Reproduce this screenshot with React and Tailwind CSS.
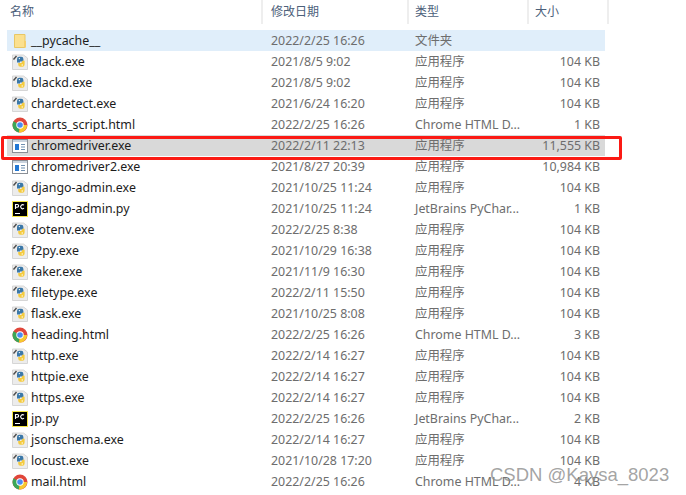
const PY = "py", CH = "ch", PC = "pc", EX = "ex", FO = "fo";
const APP = "应用程序";

const files = [
  [FO, "__pycache__", "2022/2/25 16:26", "文件夹", ""],
  [PY, "black.exe", "2021/8/5 9:02", APP, "104 KB"],
  [PY, "blackd.exe", "2021/8/5 9:02", APP, "104 KB"],
  [PY, "chardetect.exe", "2021/6/24 16:20", APP, "104 KB"],
  [CH, "charts_script.html", "2022/2/25 16:26", "Chrome HTML D...", "1 KB"],
  [EX, "chromedriver.exe", "2022/2/11 22:13", APP, "11,555 KB"],
  [EX, "chromedriver2.exe", "2021/8/27 20:39", APP, "10,984 KB"],
  [PY, "django-admin.exe", "2021/10/25 11:24", APP, "104 KB"],
  [PC, "django-admin.py", "2021/10/25 11:24", "JetBrains PyChar...", "1 KB"],
  [PY, "dotenv.exe", "2022/2/25 8:38", APP, "104 KB"],
  [PY, "f2py.exe", "2021/10/29 16:38", APP, "104 KB"],
  [PY, "faker.exe", "2021/11/9 16:30", APP, "104 KB"],
  [PY, "filetype.exe", "2022/2/11 15:50", APP, "104 KB"],
  [PY, "flask.exe", "2021/10/25 8:08", APP, "104 KB"],
  [CH, "heading.html", "2022/2/25 16:26", "Chrome HTML D...", "3 KB"],
  [PY, "http.exe", "2022/2/14 16:27", APP, "104 KB"],
  [PY, "httpie.exe", "2022/2/14 16:27", APP, "104 KB"],
  [PY, "https.exe", "2022/2/14 16:27", APP, "104 KB"],
  [PC, "jp.py", "2022/2/25 16:26", "JetBrains PyChar...", "2 KB"],
  [PY, "jsonschema.exe", "2022/2/14 16:27", APP, "104 KB"],
  [PY, "locust.exe", "2021/10/28 17:20", APP, "104 KB"],
  [CH, "mail.html", "2022/2/25 16:26", "Chrome HTML D...", "4 KB"],
];

const FileIcon = ({ type }) => {
  if (type === FO) {
    return (
      <svg width="16" height="16" viewBox="0 0 16 16">
        <path d="M2.500 1.500h10.500v13H2.500z" fill="#fbe08f" stroke="#e8c765" strokeWidth="1" />
        <path d="M12 8h2v6.500h-2z" fill="#f4cf6e" />
      </svg>
    );
  }
  if (type === CH) {
    return (
      <svg width="16" height="16" viewBox="0 0 16 16">
        <circle cx="8" cy="8" r="7.500" fill="#e0463a" />
        <path d="M8 8 1.500 4.300A7.500 7.500 0 0 0 7 15.400z" fill="#3ba657" />
        <path d="M8 8h7.200A7.500 7.500 0 0 1 7 15.400z" fill="#f7c92f" />
        <circle cx="8" cy="8" r="3.700" fill="#fff" />
        <circle cx="8" cy="8" r="2.800" fill="#4a8cf0" />
      </svg>
    );
  }
  if (type === PC) {
    return (
      <svg width="16" height="16" viewBox="0 0 16 16">
        <rect x="0.500" y="0.500" width="15" height="15" fill="#000" stroke="#f5e642" />
        <path d="M3 12h5v1H3z" fill="#fff" />
        <path d="M3.500 8V3.500h1.800a1.300 1.300 0 0 1 0 2.700H3.500M12 4.200a2 2 0 1 0 0 3" fill="none" stroke="#fff" strokeWidth="1.100" />
      </svg>
    );
  }
  if (type === EX) {
    return (
      <svg width="16" height="16" viewBox="0 0 16 16">
        <rect x="0.500" y="1.500" width="15" height="13" fill="#fff" stroke="#8a8f96" />
        <rect x="1" y="2" width="14" height="2" fill="#c9d3de" />
        <rect x="3" y="6" width="4" height="6" fill="#2478d4" />
        <path d="M9 6.500h4M9 9h4M9 11.500h4" stroke="#6f8fb0" strokeWidth="1" />
      </svg>
    );
  }
  return (
    <svg width="16" height="16" viewBox="0 0 16 16">
      <path d="M0.500 1h11l4 3v11.500h-15z" fill="#ececec" stroke="#d6d6d6" strokeWidth="1" />
      <path d="M1.500 5.500 4.500 2" stroke="#4d4d4d" strokeWidth="1.400" />
      <path d="M5 8.500V5a2.200 2.200 0 0 1 2.200-2.200h2A2.200 2.200 0 0 1 11.400 5v2.500H8v1H5z" fill="#3b78a8" />
      <circle cx="7.400" cy="4.600" r="0.700" fill="#fff" />
      <path d="M12.600 6.800v3.700a2.200 2.200 0 0 1-2.200 2.200h-2a2.200 2.200 0 0 1-2.200-2.200V9h3.400V8h0.500V6.800z" fill="#f5cb3f" />
      <circle cx="10.200" cy="11" r="0.700" fill="#fff" />
    </svg>
  );
};

const FileRow = ({ file, index }) => {
  const [type, name, date, kind, size] = file;
  const bg = index === 0 ? "bg-[#e0eefa]" : index === 5 ? "bg-[#d9d9d9]" : "";
  return (
    <div className={`flex h-[21px] w-[598px] items-center pt-[2px] text-[12.4px] text-[#6d6d6d] ${bg}`}>
      <div className="flex w-[264px] shrink-0 items-center gap-[3px] pl-[5px] text-[#1c1c1c]">
        <FileIcon type={type} />
        <span className="whitespace-nowrap">{name}</span>
      </div>
      <div className="w-[144px] shrink-0 whitespace-nowrap">{date}</div>
      <div className="w-[120px] shrink-0 whitespace-nowrap">{kind}</div>
      <div className="w-[65px] shrink-0 whitespace-nowrap text-right">{size}</div>
    </div>
  );
};

const HeaderCell = ({ label, className }) => (
  <div className={`flex h-[24px] shrink-0 items-center border-r-2 border-[#eeeeee] text-[12px] text-[#4c607a] ${className}`}>
    {label}
  </div>
);

export default function App() {
  return (
    <div
      className="relative h-[495px] w-[686px] overflow-hidden bg-white"
      style={{ fontFamily: '"Noto Sans", "Noto Sans CJK SC", sans-serif' }}
    >
      <div className="flex pl-[2px]">
        <HeaderCell label="名称" className="w-[261px] pl-[8px]" />
        <HeaderCell label="修改日期" className="w-[146px] pl-[8px]" />
        <HeaderCell label="类型" className="w-[120px] pl-[6px]" />
        <HeaderCell label="大小" className="w-[80px] pl-[6px]" />
      </div>
      <div className="ml-[7px] mt-[6px]">
        {files.map((file, i) => (
          <FileRow key={file[1]} file={file} index={i} />
        ))}
      </div>
      {/* red annotation box */}
      <div className="absolute left-[1px] top-[136px] h-[24px] w-[621px] rounded-[2px] border-[3px] border-[#fb1a14]" />
      {/* watermark */}
      <div
        className="absolute left-[490px] top-[463px] whitespace-nowrap text-[18.5px] leading-[24px] text-[#8c8c8c]/80"
        style={{ fontFamily: '"Liberation Sans", sans-serif' }}
      >
        CSDN @Kaysa_8023
      </div>
    </div>
  );
}
